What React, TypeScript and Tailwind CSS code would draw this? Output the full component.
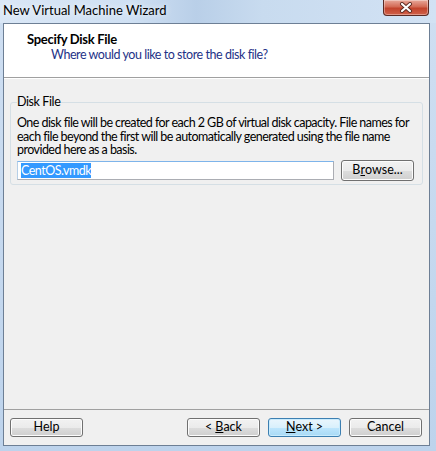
import React from "react";

const font = { fontFamily: 'Lato, "Noto Sans", sans-serif' };

const WinButton = ({
  children,
  primary = false,
  className = "",
}: {
  children: React.ReactNode;
  primary?: boolean;
  className?: string;
}) => (
  <button
    className={
      "flex items-center justify-center rounded-[3px] border text-[12.5px] leading-none text-black " +
      (primary
        ? "border-[#3c7fb1] bg-[linear-gradient(#eaf6fd_0%,#d9f0fc_50%,#bee6fd_51%,#a7d9f5_100%)] shadow-[inset_0_0_0_1px_#c8ebfd] "
        : "border-[#707070] bg-[linear-gradient(#f2f2f2_0%,#ebebeb_50%,#dddddd_51%,#cfcfcf_100%)] shadow-[inset_0_0_0_1px_#fcfcfc] ") +
      className
    }
  >
    {children}
  </button>
);

const App = () => {
  return (
    <div
      className="w-[436px] h-[451px] flex flex-col bg-[linear-gradient(#cfdff2,#bdd3ec)] overflow-hidden"
      style={font}
    >
      {/* Title bar */}
      <div className="h-[23px] flex items-start justify-between bg-[linear-gradient(90deg,#dae7f6_0%,#cfe0f3_30%,#b9cfe8_45%,#c8dbef_60%,#d2e2f4_100%)]">
        <span className="pl-[3px] pt-[2px] text-[13px] leading-[16px] text-black whitespace-nowrap [text-shadow:0_0_6px_#ffffff]">
          New Virtual Machine Wizard
        </span>
        <div className="mr-[7px] w-[46px] h-[16px] rounded-b-[4px] border border-t-0 border-[#5a2a24] bg-[linear-gradient(#e8a99b_0%,#d36a55_45%,#c2432c_55%,#d0614a_100%)] flex items-center justify-center shadow-[inset_0_0_0_1px_rgba(255,255,255,0.35)]">
          <svg width="14" height="11" viewBox="0 0 14 11">
            <path d="M3 2 L11 9 M11 2 L3 9" stroke="#5b2a22" strokeWidth="4" strokeLinecap="round" />
            <path d="M3 2 L11 9 M11 2 L3 9" stroke="#ffffff" strokeWidth="2.2" strokeLinecap="round" />
          </svg>
        </div>
      </div>

      {/* Client area */}
      <div className="ml-[3px] mr-[6px] h-[423px] border border-[#6d7f95] bg-[#f0f0f0] flex flex-col">
        {/* Header */}
        <div className="h-[54px] bg-white border-b border-[#a0a0a0] flex flex-col">
          <div className="pl-[23px] pt-[8px] text-[13px] leading-[15px] font-bold tracking-[-0.3px] text-black whitespace-nowrap">
            Specify Disk File
          </div>
          <div className="pl-[47px] text-[12.5px] leading-[15px] tracking-[-0.45px] text-[#1e3287] whitespace-nowrap">
            Where would you like to store the disk file?
          </div>
        </div>
        <div className="h-px bg-white" />

        {/* Body */}
        <div className="flex-1 pt-[16px] pl-[6px] pr-[7px]">
          <fieldset className="border border-[#d5dfe5] rounded-[3px] pl-[6px] pr-[8px] pt-[7px] pb-[3px]">
            <legend className="text-[12.5px] leading-[14px] tracking-[-0.4px] text-black px-0">Disk File</legend>
            <p className="text-[12.5px] leading-[13.5px] tracking-[-0.55px] text-black whitespace-nowrap">
              One disk file will be created for each 2 GB of virtual disk capacity. File names for
              <br />
              each file beyond the first will be automatically generated using the file name
              <br />
              provided here as a basis.
            </p>
            <div className="mt-[3px] flex items-center gap-[7px]">
              <div className="w-[317px] h-[19px] border border-[#abadb3] border-t-[#7eb4ea] border-l-[#b5cfe7] bg-white flex items-center pl-[3px]">
                <span className="bg-[#3399ff] text-white text-[12.5px] tracking-[-0.5px] leading-[15px]">CentOS.vmdk</span>
              </div>
              <WinButton className="w-[73px] h-[21px]">
                B<span className="underline">r</span>owse...
              </WinButton>
            </div>
          </fieldset>
        </div>

        {/* Footer */}
        <div className="border-t border-[#a0a0a0] h-[36px] pt-[8px] pl-[6px] pr-[7px] flex items-start">
          <WinButton className="w-[73px] h-[19px]">Help</WinButton>
          <div className="flex-1" />
          <div className="flex gap-[8px]">
            <WinButton className="w-[73px] h-[19px]">
              &lt; <span className="underline ml-[3px]">B</span>ack
            </WinButton>
            <WinButton primary className="w-[73px] h-[19px]">
              <span className="underline">N</span>ext &gt;
            </WinButton>
            <WinButton className="w-[73px] h-[19px]">Cancel</WinButton>
          </div>
        </div>
      </div>
    </div>
  );
};

export default App;
